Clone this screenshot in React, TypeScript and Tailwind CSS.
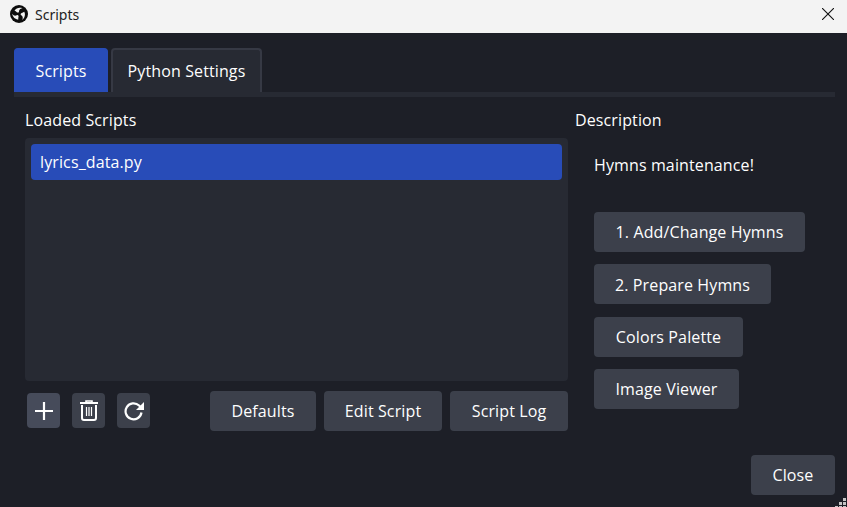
import React from "react";

function Btn({ children, className = "" }: { children: React.ReactNode; className?: string }) {
  return (
    <div className={"flex items-center justify-center rounded-[4px] text-[16px] text-[#fefefe] " + className}>
      {children}
    </div>
  );
}

const blade = "M4.5 5.6C6 3 9.5 2 12.6 3.2 10.4 3.3 9 4.6 9 6.4 9 7.6 7.6 8 6.8 7.2 6.2 6.5 5.4 6 4.5 5.6Z";

function ObsLogo() {
  return (
    <svg width="18" height="18" viewBox="0 0 18 18">
      <circle cx="9" cy="9" r="9" fill="#0d0d0d" />
      <path d={blade} fill="#f3f3f3" />
      <path d={blade} fill="#f3f3f3" transform="rotate(120 9 9)" />
      <path d={blade} fill="#f3f3f3" transform="rotate(240 9 9)" />
    </svg>
  );
}

function Grip() {
  const cells = [
    [8, 0],
    [4, 4],
    [8, 4],
    [0, 8],
    [4, 8],
    [8, 8],
  ];
  return (
    <svg className="absolute bottom-0 right-0" width="12" height="9" viewBox="0 0 12 9" fill="#c4c4c4">
      {cells.map(([x, y]) => (
        <rect key={`${x}-${y}`} x={x} y={y} width="3" height="3" />
      ))}
    </svg>
  );
}

export default function App() {
  return (
    <div className="relative flex h-[507px] w-[847px] flex-col overflow-hidden bg-[#1d1f27] font-['Open_Sans',sans-serif] text-[16px] tracking-[0.12px] text-[#fefefe]">
      <div className="flex h-[33px] shrink-0 items-center bg-[#f3f3f3] pb-[5px] pl-[10px] pr-[13px] tracking-normal text-black">
        <ObsLogo />
        <span className="ml-[7px] font-['Noto_Sans',sans-serif] text-[14px] text-[#222]">Scripts</span>
        <svg className="ml-auto" width="12" height="12" viewBox="0 0 12 12" fill="none" stroke="#111" strokeWidth="1.1">
          <path d="M0 0l12 12M12 0L0 12" />
        </svg>
      </div>

      <div className="flex min-h-0 flex-1 flex-col pl-[14px] pr-[12px] pt-[15px]">
        <div className="flex h-[44px] shrink-0 items-stretch gap-[3px]">
          <div className="flex w-[94px] items-center justify-center rounded-t-[4px] border border-b-0 border-[#284cb8] bg-[#284cb8]">Scripts</div>
          <div className="flex w-[151px] items-center justify-center rounded-t-[4px] border-2 border-b-0 border-[#363944] bg-[#272a33]">Python Settings</div>
        </div>
        <div className="h-[5px] w-[821px] shrink-0 bg-[#272a33]" />

        <div className="flex min-h-0 flex-1 pl-[11px] pt-[10px]">
          <div className="flex w-[543px] flex-col">
            <div className="flex h-[26px] items-center leading-none">Loaded Scripts</div>
            <div className="mt-[5px] h-[243px] rounded-[4px] bg-[#272a33] p-[6px]">
              <div className="flex h-[36px] items-center rounded-[4px] bg-[#284cb8] pl-[9px]">lyrics_data.py</div>
            </div>
            <div className="mt-[10px] flex items-start">
              <div className="ml-[2px] mt-[2px] flex gap-[12px]">
                <Btn className="h-[35px] w-[33px] bg-[#464b5a]">
                  <svg width="18" height="18" viewBox="0 0 18 18" fill="none" stroke="#fff" strokeWidth="2.2">
                    <path d="M9 0v18M0 9h18" />
                  </svg>
                </Btn>
                <Btn className="h-[35px] w-[33px] bg-[#3c404b]">
                  <svg width="18" height="21" viewBox="0 0 18 21" fill="none" stroke="#fff">
                    <path d="M0 3h18" strokeWidth="2" />
                    <path d="M6 2.5V1h6v1.5" strokeWidth="1.6" />
                    <path d="M2 5v13a2 2 0 0 0 2 2h10a2 2 0 0 0 2-2V5" strokeWidth="2" />
                    <path d="M6.5 7v9M9 7v9M11.5 7v9" strokeWidth="1.2" />
                  </svg>
                </Btn>
                <Btn className="h-[35px] w-[33px] bg-[#3c404b]">
                  <svg width="22" height="20" viewBox="0 0 22 20" fill="none">
                    <path d="M18.5 11.5a8 8 0 1 1-2.4-7L18 6.5" stroke="#fff" strokeWidth="2.2" />
                    <path d="M21 1v8h-8Z" fill="#fff" />
                  </svg>
                </Btn>
              </div>
              <div className="ml-auto flex gap-[8px]">
                <Btn className="h-[40px] w-[106px] bg-[#3c404b]">Defaults</Btn>
                <Btn className="h-[40px] w-[118px] bg-[#3c404b]">Edit Script</Btn>
                <Btn className="h-[40px] w-[118px] bg-[#3c404b]">Script Log</Btn>
              </div>
            </div>
          </div>

          <div className="ml-[7px] flex flex-1 flex-col">
            <div className="flex h-[26px] items-center leading-none">Description</div>
            <div className="flex flex-col items-start pl-[19px]">
              <div className="mt-[21px] flex h-[22px] items-center">Hymns maintenance!</div>
              <Btn className="mt-[36px] h-[40px] w-[211px] bg-[#3c404b]">1. Add/Change Hymns</Btn>
              <Btn className="mt-[12px] h-[40px] w-[177px] bg-[#3c404b] pt-[1px]">2. Prepare Hymns</Btn>
              <Btn className="mt-[13px] h-[40px] w-[149px] bg-[#3c404b]">Colors Palette</Btn>
              <Btn className="mt-[12px] h-[40px] w-[145px] bg-[#3c404b]">Image Viewer</Btn>
            </div>
          </div>
        </div>

        <div className="flex items-end">
          <Btn className="mb-[12px] ml-auto h-[40px] w-[84px] bg-[#3c404b]">Close</Btn>
        </div>
      </div>
      <Grip />
    </div>
  );
}
